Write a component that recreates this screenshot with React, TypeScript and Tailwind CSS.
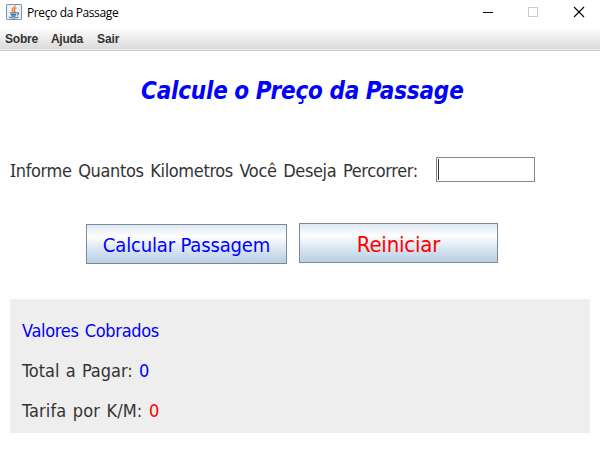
import React from "react";

const ui = "font-['DejaVu_Sans_Condensed','DejaVu_Sans',sans-serif] font-stretch-condensed";

function JavaIcon() {
  return (
    <svg width="16" height="16" viewBox="0 0 16 16" fill="none">
      <rect x="0.5" y="0.5" width="15" height="15" rx="0.5" fill="#eef2f5" stroke="#7f93a8" />
      <path d="M9.2 1.5C9.6 3.6 5.4 4.3 6.2 6.2L7.4 8M10.4 3.8C8.2 4.8 7.8 5.8 8.7 6.7 9.2 7.3 8.7 7.8 8.4 8.3" stroke="#ee8230" strokeWidth="1.4" />
      <path d="M3.8 8.9H10.6M4.6 10.6H10.2M5.2 12.1H9.6M10.8 8.9C13.6 8.2 13.2 10.6 10.8 11.3M2.8 13C5 14.4 10.5 14.2 12.6 13" stroke="#44719a" strokeWidth="1.1" />
    </svg>
  );
}

function TitleBar() {
  return (
    <header className="flex h-[27px] items-center bg-white pl-[6px]">
      <div className="-mt-[3px]"><JavaIcon /></div>
      <span className="ml-[5px] -mt-[2px] font-['Open_Sans','Noto_Sans',sans-serif] font-stretch-normal text-[12px] leading-4 tracking-[-0.38px] text-black">
        Preço da Passage
      </span>
      <svg className="ml-auto h-[27px] w-[120px]" viewBox="0 0 120 27" fill="none" shapeRendering="crispEdges">
        <path d="M3 12.5H13" stroke="#000" />
        <rect x="48.5" y="7.5" width="9" height="9" stroke="#ccc" />
        <path d="M94 7L104 17M104 7L94 17" stroke="#000" shapeRendering="auto" strokeWidth="1.1" />
      </svg>
    </header>
  );
}

function MenuBar() {
  return (
    <nav className="flex h-[24px] items-center border-b border-[#cccccc] bg-[linear-gradient(to_bottom,#ffffff_0px,#dadada_22px,#eeeeee_22px)] pl-[5px] font-['Liberation_Sans',Arial,sans-serif] text-[12px] font-bold leading-4 text-[#333333]">
      <span className="w-[46px] tracking-[-0.2px]">Sobre</span>
      <span className="w-[46px] tracking-[-0.3px]">Ajuda</span>
      <span className="tracking-[-0.1px]">Sair</span>
    </nav>
  );
}

const buttonFace =
  "flex h-[40px] items-center justify-center border border-[#7a8a99] bg-[linear-gradient(to_bottom,#dde8f3_0%,#ffffff_30%,#dde8f3_60%,#b8cfe5_100%)] whitespace-nowrap";

export default function App() {
  return (
    <div className={`h-[452px] w-[600px] overflow-hidden bg-white text-[18px] leading-6 text-[#333333] ${ui}`}>
      <TitleBar />
      <MenuBar />
      <main className="px-[10px]">
        <h1 className="ml-[131px] pt-[24px] text-[24px] leading-8 font-bold italic tracking-[-0.2px] [word-spacing:-0.6px] whitespace-nowrap text-[#0000ff]">
          Calcule o Preço da Passage
        </h1>
        <div className="mt-[50px] flex h-[25px] items-center">
          <label className="w-[426px] pt-[2px] tracking-[-0.35px] [word-spacing:1.8px] whitespace-nowrap">
            <span className="font-['Noto_Sans',sans-serif] leading-none">I</span>nforme Quantos Kilometros Você Deseja Percorrer:
          </label>
          <div className="h-[25px] w-[99px] border border-[#7a8a99] bg-white py-px pl-px">
            <div className="h-full w-px bg-[#333333]" />
          </div>
        </div>
        <div className="mt-[41px] flex items-start gap-[12px] pl-[76px]">
          <button className={`${buttonFace} mt-px w-[201px] pt-[2px] text-[20px] tracking-[-0.15px] text-[#0000ff]`}>Calcular Passagem</button>
          <button className={`${buttonFace} w-[199px] pt-[3px] text-[22px] tracking-[-0.2px] text-[#ff0000]`}>Reiniciar</button>
        </div>
        <section className="mt-[35px] flex h-[134px] flex-col gap-[16px] bg-[#eeeeee] pt-[20px] pl-[12px]">
          <p className="tracking-[-0.3px] [word-spacing:1.3px] text-[#0000ff]">Valores Cobrados</p>
          <p className="[word-spacing:1.1px]">Total a Pagar: <span className="text-[#0000ff]">0</span></p>
          <p className="tracking-[0.12px] [word-spacing:1.2px]">Tarifa por K/M: <span className="text-[#ff0000]">0</span></p>
        </section>
      </main>
    </div>
  );
}
